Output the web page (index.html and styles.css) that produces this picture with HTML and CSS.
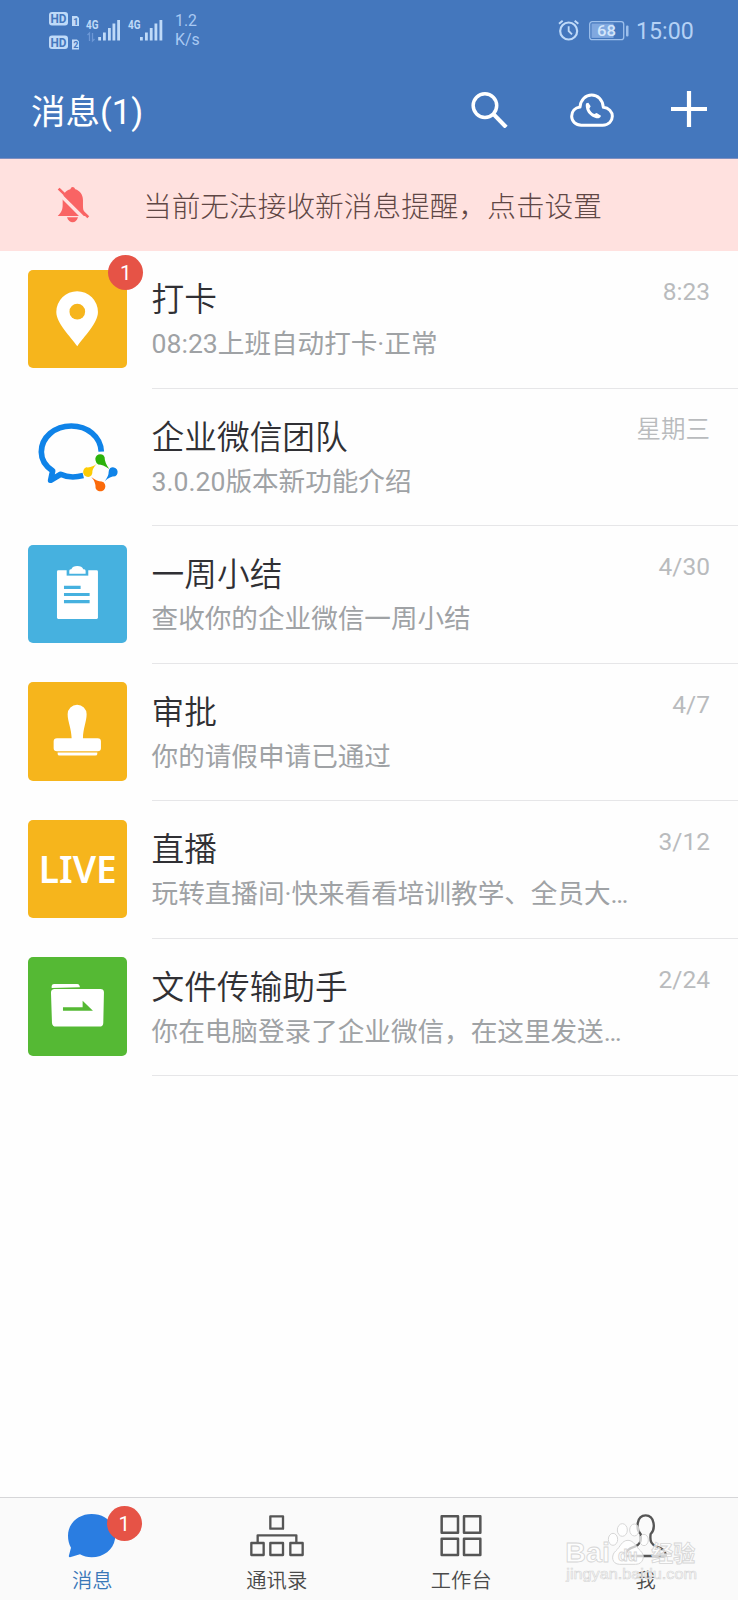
FILE: index.html
```html
<!DOCTYPE html>
<html lang="zh-CN">
<head>
<meta charset="utf-8">
<title>消息</title>
<link rel="stylesheet" href="styles.css">
</head>
<body>
<div class="app">
  <header class="header">
    <div class="status">
      <svg class="signal" viewBox="0 0 120 48">
        <g fill="#bfdaf8">
          <rect x="5" y="6" width="19" height="13.5" rx="3"/>
          <rect x="5" y="29.5" width="19" height="13.5" rx="3"/>
          <path d="M28 10h5l2 2v8h-7zM28 33.500h5l2 2v8h-7z"/>
          <rect x="54.200" y="31" width="2.800" height="3.500"/><rect x="59" y="26.500" width="2.800" height="8"/><rect x="64" y="22" width="2.800" height="12.500"/><rect x="68.500" y="17.500" width="2.800" height="17"/><rect x="73.200" y="14" width="2.800" height="20.500"/>
          <rect x="96" y="31" width="2.800" height="3.500"/><rect x="101" y="26.500" width="2.800" height="8"/><rect x="105.800" y="22" width="2.800" height="12.500"/><rect x="110.500" y="17.500" width="2.800" height="17"/><rect x="115.500" y="14" width="2.800" height="20.500"/>
        </g>
        <g class="hd"><text x="6.500" y="17.300" textLength="16" lengthAdjust="spacingAndGlyphs">HD</text><text x="6.500" y="40.800" textLength="16" lengthAdjust="spacingAndGlyphs">HD</text></g>
        <g class="sim"><text x="29.200" y="18.500">1</text><text x="29.200" y="42">2</text></g>
        <g class="net"><text x="42" y="23" textLength="12.500" lengthAdjust="spacingAndGlyphs">4G</text><text x="84" y="23" textLength="12.500" lengthAdjust="spacingAndGlyphs">4G</text></g>
        <path d="M43.500 29l2-2v8M48.500 27v8l2-2" fill="none" stroke="#6d98d6" stroke-width="1.300"/>
      </svg>
      <div class="speed"><span>1.2</span><span>K/s</span></div>
      <svg class="alarm" viewBox="0 0 66 66" fill="none" stroke="#bfdaf8">
        <circle cx="32" cy="36" r="25.500" stroke-width="6.500"/>
        <path d="M32 22V36L42 46" stroke-width="5.500"/>
        <path d="M3 14L14 5M50 5L61 14" stroke-width="6"/>
      </svg>
      <svg class="battery" viewBox="0 0 40 20">
        <rect x="0.700" y="0.700" width="34" height="18" rx="2.500" fill="none" stroke="#9dc0ec" stroke-width="1.300"/>
        <rect x="2.500" y="2.500" width="22" height="14.400" fill="#80a8df"/>
        <rect x="37" y="4.500" width="2.500" height="11" rx="1" fill="#9dc0ec"/>
        <text x="8" y="15.200" textLength="19" lengthAdjust="spacingAndGlyphs">68</text>
      </svg>
      <span class="clock">15:00</span>
    </div>
    <div class="titlebar">
      <h1 class="title">消息(1)</h1>
      <svg class="i-search" viewBox="0 0 110 110" fill="none" stroke="#fff"><circle cx="42" cy="41" r="35.500" stroke-width="10.500"/><path d="M67 66L106 106" stroke-width="12.500"/></svg>
      <svg class="i-cloud" viewBox="0 0 132 102" fill="none" stroke="#fff">
        <path d="M34 96.500H98C116 96.500 127 84 127 70C127 56 116 44 100 43C98 20 83 6 65 6C47 6 32 20 30 42C15 44 5 55 5 70C5 85 17 96.500 34 96.500Z" stroke-width="9" stroke-linejoin="round"/>
        <path d="M49 31L55 29L62 40L58 47C61 55 66 60 73 63L80 60L93 68C91 75 84 77 77 75C62 70 50 58 48 44C47 38 47 34 49 31Z" fill="#fff" stroke="none"/>
      </svg>
      <svg class="i-plus" viewBox="0 0 36 36"><path d="M18 0V36M0 18H36" stroke="#fff" stroke-width="4.200"/></svg>
    </div>
  </header>

  <div class="notice">
    <svg class="i-bell" viewBox="170 90 100 115">
      <path d="M172 183C183 172 187 165 187 150V136C187 118 197 106 210 103Q212 96 217 96Q222 96 225 103C238 107 248 118 248 136V152C248 168 252 174 262 183Z" fill="#f96464"/>
      <path d="M200 187H233C230 197 224 202 217 202S203 197 200 187Z" fill="#f96464"/>
      <path d="M168 108L250 190" stroke="#ffe1df" stroke-width="10"/>
      <path d="M175 101L264 187" stroke="#f96464" stroke-width="8"/>
    </svg>
    <span>当前无法接收新消息提醒，点击设置</span>
  </div>

  <main class="list">
    <div class="row">
      <div class="avatar yellow">
        <svg viewBox="0 0 296 296"><path d="M148 229C128 200 85 160 85 126A62.500 62.500 0 0 1 210 126C210 160 168 200 148 229Z" fill="#fff"/><circle cx="148" cy="125" r="23.500" fill="#f6b51c"/></svg>
        <span class="badge">1</span>
      </div>
      <div class="body"><div class="text"><div class="name">打卡</div><div class="msg">08:23上班自动打卡·正常</div></div><time>8:23</time></div>
    </div>
    <div class="row">
      <div class="avatar">
        <svg viewBox="0 0 296 296">
          <path d="M220 134C218 88 178 57 130 57C80 57 40 91 40 135C40 157 52 177 74 192L68 220L98 202C118 212 142 212 166 206" fill="none" stroke="#0f83e8" stroke-width="17" stroke-linejoin="round"/>
          <path d="M203 161A14 14 0 1 1 230 151Q230 168 244 186Q224 173 211 173Q205 170 203 161Z" fill="#2cb20a"/>
          <path d="M247 183A14 14 0 1 1 262 208Q246 208 230 223Q243 206 242 196Q242 187 247 183Z" fill="#0f83e8"/>
          <path d="M231 232A14.500 14.500 0 1 1 203 244Q204 225 190 210Q208 224 221 224Q228 225 231 232Z" fill="#fb6a0a"/>
          <path d="M186 209A14 14 0 1 1 175 181Q193 183 207 170Q192 186 193 199Q192 206 186 209Z" fill="#fdcc05"/>
        </svg>
      </div>
      <div class="body"><div class="text"><div class="name">企业微信团队</div><div class="msg">3.0.20版本新功能介绍</div></div><time class="cn">星期三</time></div>
    </div>
    <div class="row">
      <div class="avatar blue">
        <svg viewBox="0 0 296 296"><path d="M91 76H206Q210 76 210 80V218Q210 222 206 222H91Q87 222 87 218V80Q87 76 91 76Z" fill="#fff"/><path d="M116 72H181V92H116Z" fill="#46b1df"/><path d="M124 86V77Q124 73 130 73Q134 63 148 63T166 73Q173 73 173 77V86Z" fill="#fff"/><path d="M108 127H158M108 148.500H185M108 170H185" stroke="#46b1df" stroke-width="9.500"/></svg>
      </div>
      <div class="body"><div class="text"><div class="name">一周小结</div><div class="msg">查收你的企业微信一周小结</div></div><time>4/30</time></div>
    </div>
    <div class="row">
      <div class="avatar yellow">
        <svg viewBox="0 0 296 296" fill="#fff"><path d="M131 169C131 142 119 118 119 97A28.500 28.500 0 0 1 176 97C176 118 165 142 165 169H209Q219 169 219 179V199Q219 208 209 208H87Q77 208 77 199V179Q77 169 87 169Z"/><path d="M89 211.500H208V216Q208 221 202 221H95Q89 221 89 216Z"/></svg>
      </div>
      <div class="body"><div class="text"><div class="name">审批</div><div class="msg">你的请假申请已通过</div></div><time>4/7</time></div>
    </div>
    <div class="row">
      <div class="avatar yellow live">LIVE</div>
      <div class="body"><div class="text"><div class="name">直播</div><div class="msg">玩转直播间·快来看看培训教学、全员大…</div></div><time>3/12</time></div>
    </div>
    <div class="row">
      <div class="avatar green">
        <svg viewBox="0 0 296 296"><path d="M71 93V87Q72 81 78 81H148Q154 81 155 87L156 91Z" fill="#fff"/><path d="M80 96H217Q229 96 228 108L226 198Q226 209 214 209H84Q73 209 72 198L69 107Q69 96 80 96Z" fill="#fff"/><path d="M105 151H164V131L195 161.500H105Z" fill="#55b934"/></svg>
      </div>
      <div class="body"><div class="text"><div class="name">文件传输助手</div><div class="msg">你在电脑登录了企业微信，在这里发送…</div></div><time>2/24</time></div>
    </div>
  </main>

  <nav class="tabs">
    <div class="tab active">
      <div class="tab-icon">
        <svg class="i-chat" viewBox="0 0 142 132"><path d="M71 0C111 0 142 27 142 64C142 103 111 130 71 130C58 130 46 127 36 121L6 130Q1 130 3 124L9 101C3 90 0 78 0 65C0 28 31 0 71 0Z" fill="#2a7de1"/></svg>
        <span class="badge">1</span>
      </div>
      <span>消息</span>
    </div>
    <div class="tab">
      <div class="tab-icon"><svg class="i-org" viewBox="0 0 162 126" fill="none" stroke="#555" stroke-width="7" stroke-linejoin="round"><path d="M61 4H99V41H61ZM4 84H41V120H4ZM61 84H99V120H61ZM121 84H158V120H121ZM23 84V61H139V84"/></svg></div>
      <span>通讯录</span>
    </div>
    <div class="tab">
      <div class="tab-icon"><svg class="i-grid" viewBox="0 0 126 126" fill="none" stroke="#555" stroke-width="7.500" stroke-linejoin="round"><path d="M5 4H54V53H5ZM72 4H121V53H72ZM5 71H54V120H5ZM72 71H121V120H72Z"/></svg></div>
      <span>工作台</span>
    </div>
    <div class="tab">
      <div class="tab-icon"><svg class="i-me" viewBox="0 0 130 132" fill="none" stroke="#555" stroke-width="7" stroke-linejoin="round"><path d="M50 60C35 46 37 4 65 4S95 46 80 60C77 84 83 92 98 98Q126 106 126 126H4Q4 106 32 98C47 92 53 84 50 60Z"/></svg></div>
      <span>我</span>
    </div>
    <svg class="watermark" viewBox="0 0 405 190">
      <g class="wm-shape"><ellipse cx="147" cy="61" rx="14" ry="18"/><ellipse cx="175" cy="33" rx="15" ry="19"/><ellipse cx="211" cy="33" rx="14" ry="18"/><ellipse cx="240" cy="63" rx="13" ry="17"/><path d="M192 64C210 64 217 85 230 96C244 109 239 136 215 136H167C143 136 140 109 155 96C169 84 173 64 192 64Z"/></g>
      <g class="wm-text"><text x="4" y="130" font-size="84" textLength="134" lengthAdjust="spacingAndGlyphs">Bai</text><text x="162" y="127" font-size="48">du</text><text x="262" y="127" font-size="66">经验</text></g>
      <g class="wm-text wm-url"><text x="7" y="180" font-size="43" textLength="392" lengthAdjust="spacingAndGlyphs">jingyan.baidu.com</text></g>
    </svg>
  </nav>
</div>
</body>
</html>
```
FILE: styles.css
```css
* { box-sizing: border-box; }
body {
  margin: 0;
  background: #fefefe;
  font-family: Roboto, "Noto Sans CJK SC", sans-serif;
  font-weight: 300;
}
svg { display: block; flex: none; }
.app { width: 738px; height: 1600px; display: flex; flex-direction: column; overflow: hidden; }

.header { height: 159px; background: #4477bd; border-bottom: 1px solid #7f8fc0; }
.status { height: 61px; padding: 6px 0 0 44px; display: flex; align-items: flex-start; color: #bfdaf8; }
.signal { width: 120px; height: 48px; }
.signal text { font-family: Roboto, sans-serif; font-weight: 700; }
.hd text { font-size: 13px; fill: #4477bd; }
.sim text { font-size: 9px; fill: #4477bd; }
.net text { font-size: 13.5px; fill: #bfdaf8; }
.speed { width: 40px; margin-left: 11px; padding-top: 6px; display: flex; flex-direction: column; font-size: 15.8px; line-height: 18.5px; font-weight: 400; color: #a9c9f3; }
.alarm { width: 22px; height: 22px; margin: 13px 0 0 343px; }
.battery { width: 40px; height: 20px; margin: 15px 0 0 9px; }
.battery text { font-size: 15px; font-weight: 500; fill: #d3e6fb; }
.clock { margin: 10px 0 0 7px; font-size: 23.2px; line-height: 30px; font-weight: 400; color: #b4d1f5; }
.titlebar { height: 97px; display: flex; padding-left: 31px; color: #fff; }
.title { margin: 28px 0 0; width: 440px; font-size: 34.5px; line-height: 46px; font-weight: 400; }
.i-search { width: 36.5px; height: 36.5px; margin: 30.5px 0 0 0; }
.i-cloud { width: 44px; height: 34px; margin: 32px 0 0 62px; }
.i-plus { width: 36px; height: 36px; margin: 30px 0 0 57.5px; }

.notice { height: 92px; background: #ffe1df; display: flex; align-items: center; color: #5f4745; font-size: 28.7px; white-space: nowrap; }
.i-bell { width: 33.3px; height: 38.3px; margin: 0 53px 2px 56.7px; }
.notice span { margin-top: -1px; }

.list { flex: 1; }
.row { height: 137.5px; display: flex; padding-left: 28.4px; }
.avatar { position: relative; width: 98.6px; height: 98.6px; margin-top: 18.8px; border-radius: 5px; flex: none; }
.avatar svg { width: 100%; height: 100%; }
.yellow { background: #f6b51c; }
.blue { background: #46b1df; }
.green { background: #55b934; }
.live { display: flex; align-items: center; justify-content: center; padding-bottom: 2px; color: #fff; font: 600 37px "Noto Sans", sans-serif; }
.badge {
  position: absolute; right: -16.5px; top: -15px; width: 35.4px; height: 35.4px; border-radius: 50%;
  background: #e65346; color: #fff; font-size: 20.5px; line-height: 36.4px; font-weight: 400; text-align: center;
}
.body { flex: 1; margin-left: 24.6px; padding-right: 28px; display: flex; justify-content: space-between; border-bottom: 1px solid #e6e6e8; }
.name { margin-top: 29px; font-size: 32.7px; line-height: 40px; color: #303034; font-weight: 350; white-space: nowrap; }
.msg { margin-top: 4px; font-size: 26.6px; line-height: 40px; color: #9fa2a5; font-weight: 400; white-space: nowrap; }
time { margin-top: 26px; font-size: 24.5px; line-height: 30px; color: #b9bbbd; font-weight: 400; }
.cn { font-weight: 350; }

.tabs { position: relative; height: 103px; background: #fafafa; border-top: 1px solid #d6d6d8; display: grid; grid-template-columns: repeat(4, 1fr); }
.tab { display: flex; flex-direction: column; align-items: center; color: #4a4a4a; font-size: 20.3px; line-height: 28px; font-weight: 350; }
.tab.active { color: #3a78b8; }
.tab-icon { position: relative; height: 69px; padding-top: 16px; }
.tab.active .tab-icon { left: -1px; }
.i-chat { width: 47.3px; height: 44px; }
.i-org { width: 54px; height: 42px; margin-top: 1px; }
.i-grid { width: 42px; height: 42px; margin-top: 1px; }
.i-me { width: 43.3px; height: 44px; }
.tabs .badge { right: -27px; top: 8px; }
.watermark { position: absolute; left: 564px; top: 21px; width: 135px; height: 63.3px; }
.wm-shape { fill: rgba(255,255,255,.7); stroke: #d6d6d6; stroke-width: 3; }
.wm-text { fill: rgba(255,255,255,.75); stroke: #d6d6d6; stroke-width: 2.5; font-family: "Liberation Sans", "Noto Sans CJK SC", sans-serif; font-weight: 700; }
.wm-url { stroke-width: 1.8; font-weight: 400; }
```
